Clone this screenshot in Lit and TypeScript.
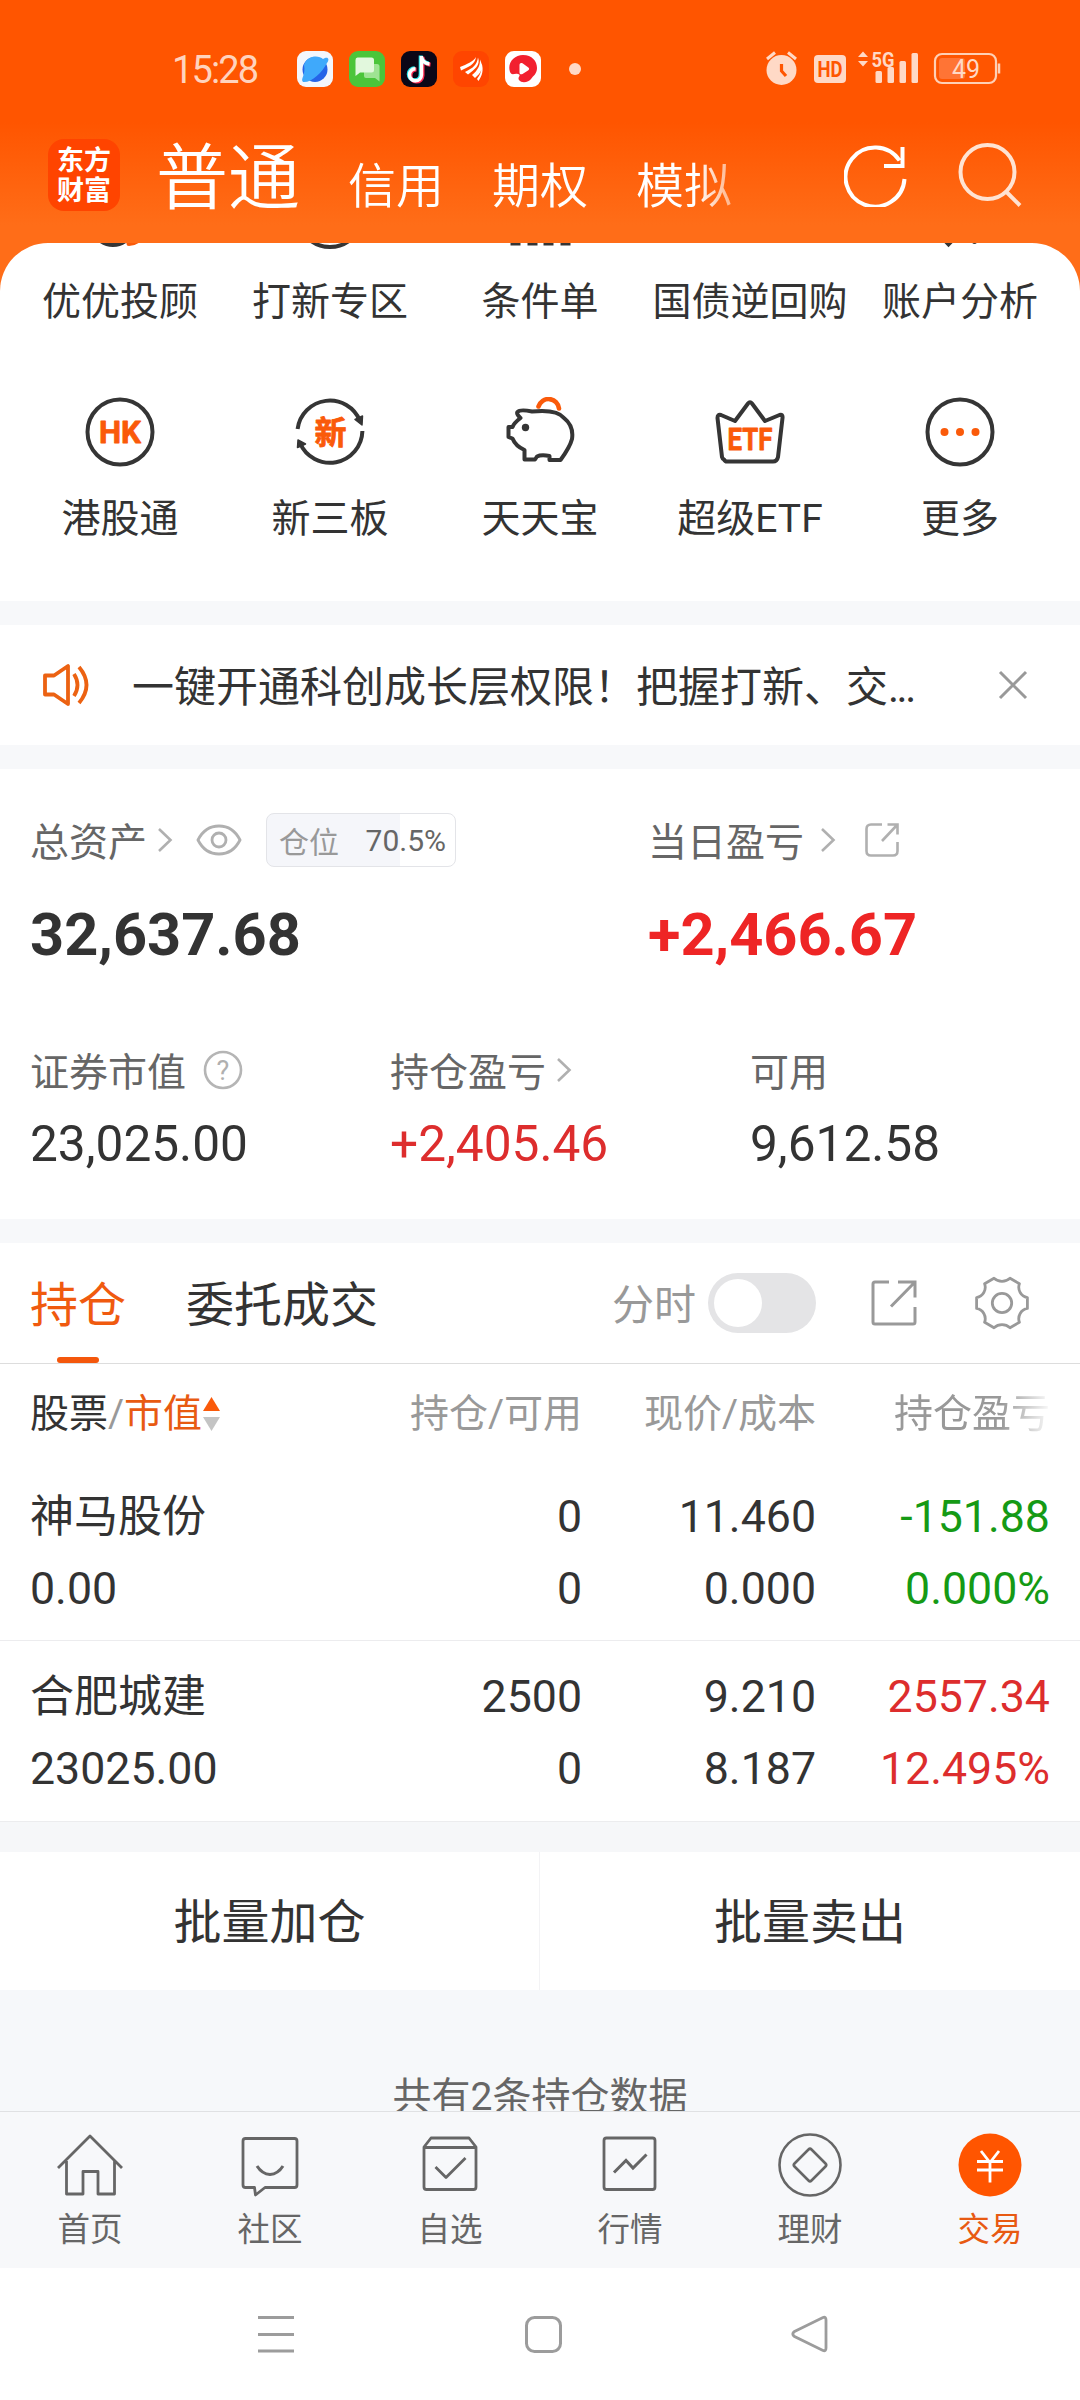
import { LitElement, html, css, svg } from "lit";
import { customElement } from "lit/decorators.js";
import { classMap } from "lit/directives/class-map.js";

const icon = (w: number, h: number, body: unknown) =>
  html`<svg width=${w} height=${h} viewBox="0 0 ${w} ${h}" fill="none">${body}</svg>`;

const chevron = icon(16, 26, svg`<path d="M2 2L13.500 13L2 24" stroke="#b0b0b0" stroke-width="2.600"/>`);

const appIcons = [
  svg`<rect width="36" height="36" rx="9" fill="#f3f6fc"/><circle cx="18" cy="18.500" r="12.500" fill="#2563e8"/><path d="M6 31C3 28 9 24 7 14C10 4 22 4 26 8C31 5 33 8 30 12C25 22 14 32 6 31Z" fill="#3fa9fb"/>`,
  svg`<rect width="36" height="36" rx="9" fill="#4bc53a"/><path d="M15 13h13a2.500 2.500 0 0 1 2.500 2.500v15l-4.500-3.500h-9a2 2 0 0 1-2-2z" fill="#9fe393"/><path d="M8.500 6.500h14a2.500 2.500 0 0 1 2.500 2.500v10a2.500 2.500 0 0 1-2.500 2.500h-11.500l-4.500 3.500v-16a2.500 2.500 0 0 1 2-2.500z" fill="#e2f8dd"/>`,
  svg`<rect width="36" height="36" rx="9" fill="#0b0717"/><g stroke-width="4" fill="none"><path d="M20.500 5v19a6 6 0 1 1-6-6.200M20.500 6c1 4.500 4 6.500 8 7" stroke="#ff2d55" transform="translate(1 .8)"/><path d="M20.500 5v19a6 6 0 1 1-6-6.200M20.500 6c1 4.500 4 6.500 8 7" stroke="#29e9ec" transform="translate(-.8 -.6)"/><path d="M20.500 5v19a6 6 0 1 1-6-6.200M20.500 6c1 4.500 4 6.500 8 7" stroke="#fff" stroke-width="3.400"/></g>`,
  svg`<rect width="36" height="36" rx="9" fill="#ff4500"/><path d="M7 16C14 13 20 11 23 6C22 14 15 16 8 19.500ZM12 21C20 17 24 14 25 6.500C28 14 21 19 15 23.500ZM19 24C25 19 27 15 27 8.500C31 17 28 22 22 27ZM24 28C28 23 29 18 28.500 12C31 19 29 25 25.500 30Z" fill="#fff"/>`,
  svg`<rect width="36" height="36" rx="9" fill="#fff"/><path d="M18 4C27 4 32 10 32 17C32 23 28 25 26 28C24 31 17 33 14 29C12 26 17 24 13 23C9 22 7 25 5 21C2 12 9 4 18 4Z" fill="#f2202f"/><path d="M14.500 14c0-2 1.500-2.500 3-1.700l5.500 4c1.500 1 1.500 2.200 0 3.200l-5.500 3.500c-1.500.8-3 .3-3-1.500z" fill="#fff"/>`,
];

const ink = "#353535";
const hot = "#fa5a0a";

const shortcuts = [
  { label: "优优投顾", art: svg`<circle cx="28" cy="44" r="21" stroke=${ink} stroke-width="4"/><path d="M44 63.500q8 0 13-8" stroke=${hot} stroke-width="5" stroke-linecap="round"/>` },
  { label: "打新专区", art: svg`<circle cx="35" cy="34.500" r="32.500" stroke=${ink} stroke-width="4"/>` },
  { label: "条件单", art: svg`<path d="M10.500 50v15.500M27.500 40v25.500M43.500 30v35.500M60.500 20v45.500" stroke=${ink} stroke-width="10"/>` },
  { label: "国债逆回购", art: svg`<circle cx="35" cy="30" r="26" stroke=${ink} stroke-width="4"/>` },
  { label: "账户分析", art: svg`<path d="M12 52l11.500 12l11.500-12" stroke=${ink} stroke-width="4.500"/><circle cx="49.500" cy="61.500" r="2.500" fill=${ink}/>` },
  { label: "港股通", art: svg`<circle cx="35" cy="35" r="32.500" stroke=${ink} stroke-width="4"/><text x="35" y="46" class="glyph" font-size="32" textLength="42" lengthAdjust="spacingAndGlyphs">HK</text>` },
  { label: "新三板", art: svg`<path d="M2.600 32A32.500 32.500 0 0 1 65 24M67.400 34A32.500 32.500 0 0 1 5 46" stroke=${ink} stroke-width="4"/><path d="M60 22.500l7.500-3.500l-.5 9zM3 43l7.500 4l-8 3.500z" fill=${ink} stroke=${ink} stroke-width="1.500" stroke-linejoin="round"/><text x="35.500" y="46.500" class="glyph cjk" font-size="32">新</text>` },
  { label: "天天宝", art: svg`<path d="M33.500 9.500a10.500 10.500 0 0 1 20.500 2" stroke=${hot} stroke-width="4.600" stroke-linecap="round"/><path d="M12.500 15Q15 12 27 14.500Q52 12 59 21Q69 29 67 42Q65 50 55.500 63H44.500V59Q36 57.500 32 59.500L30 62.500H19.500V53Q10.500 49 7.500 41.500L3.500 40V30H7.500Q9 26 15.500 21Q11 17 12.500 15Z" stroke=${ink} stroke-width="4" stroke-linejoin="round"/><circle cx="20.500" cy="30.500" r="3.700" fill=${ink}/>` },
  { label: "超级ETF", art: svg`<path d="M9 62.500Q7.500 62 7 60L2.500 21Q2.500 17 6 18L20 24L33 6.500Q35 4 37 6.500L50 24L64.500 18Q68 17 67.500 21L63 60Q62 64.500 58 64.500H12Q10 64.500 9 62.500Z" stroke=${ink} stroke-width="4" stroke-linejoin="round"/><text x="35" y="53" class="glyph" font-size="32" textLength="45" lengthAdjust="spacingAndGlyphs">ETF</text>` },
  { label: "更多", art: svg`<circle cx="35" cy="35" r="32.500" stroke=${ink} stroke-width="4"/><g fill=${hot}><circle cx="19.500" cy="35" r="4"/><circle cx="35" cy="35" r="4"/><circle cx="50.500" cy="35" r="4"/></g>` },
];

const holdings = [
  { name: "神马股份", value: "0.00", held: "0", usable: "0", price: "11.460", cost: "0.000", gain: "-151.88", rate: "0.000%", tone: "down" },
  { name: "合肥城建", value: "23025.00", held: "2500", usable: "0", price: "9.210", cost: "8.187", gain: "2557.34", rate: "12.495%", tone: "up" },
];

const g = "#666";
const navItems = [
  { label: "首页", art: svg`<path d="M1 35L33 3L65 35M9.500 28V61H26V38.500H41V61H57.500V28" stroke=${g} stroke-width="2.800" stroke-linejoin="round"/>` },
  { label: "社区", art: svg`<path d="M8.500 5.500H57.500Q60 5.500 60 8V52Q60 54.500 57.500 54.500H28L18.500 62L17.500 54.500H8.500Q6 54.500 6 52V8Q6 5.500 8.500 5.500Z" stroke=${g} stroke-width="2.800" stroke-linejoin="round"/><path d="M20 33Q25 41 33 41.500Q41 41 46 33" stroke=${g} stroke-width="3"/>` },
  { label: "自选", art: svg`<path d="M7 14L14 5H52L59 14V54Q59 56.500 56.500 56.500H9.500Q7 56.500 7 54ZM7 14.500H59M18.500 34L29 44.500L48.500 25" stroke=${g} stroke-width="2.800" stroke-linejoin="round"/>` },
  { label: "行情", art: svg`<rect x="7" y="5" width="51" height="51.500" rx="2.500" stroke=${g} stroke-width="2.800"/><path d="M17 39.500L29 27.500L36 35L49.500 21.500" stroke=${g} stroke-width="3"/>` },
  { label: "理财", art: svg`<circle cx="33" cy="32" r="30.500" stroke=${g} stroke-width="2.600"/><path d="M31.500 16.500Q33 15 34.500 16.500L48.500 30.500Q50 32 48.500 33.500L34.500 47.500Q33 49 31.500 47.500L17.500 33.500Q16 32 17.500 30.500Z" stroke=${g} stroke-width="2.600"/>` },
  { label: "交易", active: true, art: svg`<circle cx="33" cy="32" r="31.500" fill="#ff5500"/><path d="M24 18L33 29.500L42 18M20 28.500H46M20 37H46M33 28V49.500" stroke="#fff" stroke-width="2.800"/>` },
];

const shareLarge = icon(48, 48, svg`<path d="M19 3H5Q3 3 3 5V43Q3 45 5 45H43Q45 45 45 43V28M28 3H45V18.500M45 3L21 27.500" stroke="#999" stroke-width="3"/>`);
const shareSmall = html`<svg class="share" width="36" height="36" viewBox="0 0 36 36" fill="none"><path d="M18 2.500H7Q2.500 2.500 2.500 7V29Q2.500 33.500 7 33.500H29Q33.500 33.500 33.500 29V20M23.500 2.500H33.500V12.500M33.500 2.500L18 19" stroke="#b0b0b0" stroke-width="2.600"/></svg>`;
const gear = icon(54, 54, svg`<path d="M52.400 32.400A10.500 10.500 0 0 0 44.400 46.300L35 51.700A12 12 0 0 0 19 51.700L9.600 46.300A10.500 10.500 0 0 0 1.600 32.400V21.600A10.500 10.500 0 0 0 9.600 7.700L19 2.300A12 12 0 0 0 35 2.300L44.400 7.700A10.500 10.500 0 0 0 52.400 21.600Z" stroke="#999" stroke-width="2.800" stroke-linejoin="round"/><circle cx="27" cy="27" r="9.700" stroke="#999" stroke-width="2.800"/>`);

@customElement("app-root")
export class AppRoot extends LitElement {
  static styles = css`
    :host {
      display: block;
      width: 1080px;
      height: 2400px;
      overflow: hidden;
      background: #fff;
      color: #333;
      font-family: Roboto, "Noto Sans CJK SC", sans-serif;
    }
    * { box-sizing: border-box; }
    svg { display: block; flex: none; }
    .page { display: flex; flex-direction: column; height: 2400px; }
    .row { display: flex; align-items: center; }
    .hero {
      flex: none;
      height: 601px;
      background: linear-gradient(#ff5500 0, #ff5500 122px, #ff6d18 225px, #ff6d18 100%);
    }
    .status {
      height: 87px;
      padding: 51px 78px 0 172px;
      align-items: flex-start;
      color: #ffd3bd;
    }
    .clock { flex: none; font-size: 38px; line-height: 38px; width: 125px; letter-spacing: -1.9px; }
    .apps { flex: none; gap: 16px; }
    .indicators { margin-left: auto; }
    .dot { width: 12px; height: 12px; border-radius: 50%; margin-left: 12px; background: #ffd9c6; }
    .header { height: 156px; padding: 0 58px 0 48px; align-items: flex-start; }
    .logo {
      flex: none;
      margin-top: 52px;
      width: 72px;
      height: 72px;
      border-radius: 16px;
      background: #ff4400;
      color: #fff;
      font-family: "Noto Sans CJK SC", sans-serif;
      font-weight: 700;
      font-size: 27px;
      line-height: 30px;
      text-align: center;
      padding-top: 5px;
    }
    .modes {
      flex: none;
      display: flex;
      align-items: baseline;
      gap: 48px;
      width: 640px;
      margin: 40px 0 0 36px;
      color: #fff;
      font-size: 48px;
      font-weight: 350;
      line-height: 104px;
      white-space: nowrap;
      mask-image: linear-gradient(to right, #000 540px, transparent 612px);
    }
    .mode.current { font-size: 72px; }
    .tools { flex: none; margin: 54px 0 0 48px; gap: 50px; align-items: flex-start; }
    .sheet {
      height: 358px;
      border-radius: 48px 48px 0 0;
      background: #fff;
      overflow: hidden;
    }
    .grid {
      display: grid;
      grid-template-columns: repeat(5, 210px);
      grid-auto-rows: 217px;
      padding: 0 15px;
      margin-top: -63px;
    }
    .cell { display: flex; flex-direction: column; align-items: center; gap: 25px; }
    .cell-label { font-size: 39px; line-height: 54px; white-space: nowrap; }
    .glyph {
      fill: #fa5a0a;
      stroke: #fa5a0a;
      stroke-width: 0.8;
      stroke-linejoin: round;
      font-family: Roboto, sans-serif;
      font-weight: 700;
      text-anchor: middle;
    }
    .glyph.cjk { font-family: "Noto Sans CJK SC", sans-serif; }
    .band { flex: none; height: 24px; background: #f7f8fa; }
    .notice { flex: none; height: 120px; padding: 0 52px 0 42px; }
    .notice-text { margin-left: 40px; padding-bottom: 3px; font-size: 42px; flex: 1; white-space: nowrap; }
    .dots { letter-spacing: -2.500px; }
    .assets { flex: none; height: 450px; }
    .totals { display: grid; grid-template-columns: 618px 1fr; padding: 44px 0 0 30px; }
    .label { height: 54px; font-size: 39px; color: #666; white-space: nowrap; }
    .label > span { padding-bottom: 2px; }
    .label svg { margin-left: 10px; }
    .label.wide > span + svg { margin-left: 16px; }
    .label .share { margin-left: 28px; }
    .label .eye { margin-left: 23px; }
    .badge {
      margin-left: 24px;
      width: 190px;
      height: 54px;
      border: 1.500px solid #e3e4e8;
      border-radius: 8px;
      background: linear-gradient(to right, #f5f6fa 70.5%, #fff 70.5%);
      padding: 0 9px 0 12px;
      justify-content: space-between;
      font-size: 30px;
      color: #666;
    }
    .badge-name { color: #999; }
    .big { margin-top: 31px; font-size: 59.500px; line-height: 74px; font-weight: 700; }
    .parts { display: grid; grid-template-columns: 360px 360px 1fr; padding: 71px 0 0 30px; }
    .part-value { margin-top: 17px; font-size: 49.600px; line-height: 60px; }
    .up { color: #dd2d2d; }
    .big.up { color: #ee2525; }
    .down { color: #159a15; }
    .tabs { flex: none; height: 121px; border-bottom: 1px solid #ddd; padding: 0 51px 0 30px; align-items: stretch; }
    .tab { position: relative; display: flex; align-items: center; font-size: 48px; margin-right: 60px; padding-bottom: 4px; }
    .tab.current { color: #f05a0f; }
    .tab.current::after {
      content: "";
      position: absolute;
      left: 27px;
      bottom: 0;
      width: 42px;
      height: 6px;
      border-radius: 3px;
      background: #f4570c;
    }
    .tab-tools { margin-left: auto; color: #999; font-size: 42px; }
    .tab-tools > span { padding-bottom: 3px; }
    .switch { width: 108px; height: 60px; border-radius: 30px; background: #e4e4e6; padding: 6px; margin: 0 54px 0 12px; }
    .knob { width: 48px; height: 48px; border-radius: 50%; background: #fff; }
    .tab-tools svg + svg { margin-left: 57px; }
    .columns {
      flex: none;
      display: grid;
      grid-template-columns: 1fr 234px 234px 234px;
      align-content: start;
      padding: 0 30px;
      text-align: right;
      white-space: nowrap;
    }
    .head { height: 98px; padding-top: 1px; line-height: 98px; font-size: 39px; color: #999; }
    .sorter { display: flex; align-items: center; }
    .dark { color: #333; }
    .accent { color: #e85a12; }
    .faded { mask-image: linear-gradient(to right, #000 185px, rgba(0, 0, 0, 0.05) 234px); }
    .holding { height: 181px; padding-top: 20px; font-size: 44.700px; line-height: 72px; border-bottom: 1px solid #ececee; }
    .holding.first { height: 179px; padding-top: 19px; }
    .holding > .name { font-size: 44px; text-align: left; }
    .worth { text-align: left; }
    .gap { flex: none; height: 30px; background: #f6f7f9; }
    .actions { flex: none; display: grid; grid-template-columns: 539px 1fr; height: 138px; font-size: 48px; text-align: center; line-height: 142px; }
    .action + .action { border-left: 1px solid #f3f3f5; }
    .summary { flex: none; height: 121px; padding-top: 80px; background: #f6f8fa; color: #666; font-size: 39px; line-height: 54px; text-align: center; overflow: hidden; }
    .nav { flex: none; display: grid; grid-template-columns: repeat(6, 180px); height: 157px; background: #f7f8fa; border-top: 1px solid #e0e1e3; }
    .nav-item { display: flex; flex-direction: column; align-items: center; padding-top: 21px; color: #666; font-size: 32.500px; line-height: 40px; }
    .nav-item svg { margin-bottom: 13px; }
    .nav-item.current { color: #e85a12; }
    .system { flex: 1; padding: 0 252px 0 257px; justify-content: space-between; }
  `;

  render() {
    return html`
      <div class="page">
        <div class="hero">
          <div class="row status">
            <span class="clock">15:28</span>
            <div class="row apps">${appIcons.map((a) => icon(36, 36, a))}<i class="dot"></i></div>
            <svg class="indicators" width="236" height="36" viewBox="0 0 236 36" fill="none">
              <g fill="#ffd9c6">
                <circle cx="15.500" cy="19" r="15"/>
                <path d="M1 8L9 1.500M22 1.500L30 8" stroke="#ffd9c6" stroke-width="3"/>
                <path d="M15.500 13v7l4.500 5" stroke="#ff5500" stroke-width="3.200"/>
                <rect x="48" y="4" width="32" height="28" rx="4"/>
                <text x="64" y="26" text-anchor="middle" font-size="22" font-weight="700" fill="#ff5500" textLength="25" lengthAdjust="spacingAndGlyphs">HD</text>
                <path d="M92 6l5-5.500l5 5.500zM92 10h10l-5 5.500z"/>
                <text x="117" y="15.500" text-anchor="middle" font-size="20.500" font-weight="700" textLength="23" lengthAdjust="spacingAndGlyphs">5G</text>
                <rect x="109.500" y="20" width="6.500" height="12" rx="1.500"/>
                <rect x="121.500" y="16" width="6.500" height="16" rx="1.500"/>
                <rect x="133.500" y="10" width="6.500" height="22" rx="1.500"/>
                <rect x="145.500" y="2" width="6.500" height="30" rx="1.500"/>
                <rect x="169" y="3" width="61" height="29" rx="7" stroke="#ffd0b5" stroke-width="2.200" fill="none"/>
                <rect x="173" y="7" width="26" height="21" rx="3" fill="#ff7435"/>
                <path d="M233 12.500v10" stroke="#ffd0b5" stroke-width="2.500"/>
                <text x="200" y="26.500" text-anchor="middle" font-size="25">49</text>
              </g>
            </svg>
          </div>
          <div class="row header">
            <div class="logo">东方<br />财富</div>
            <div class="modes">
              <span class="mode current">普通</span><span class="mode">信用</span><span class="mode">期权</span><span class="mode">模拟</span>
            </div>
            <div class="row tools">
              ${icon(64, 66, svg`<path d="M60.500 38A29.500 29.500 0 1 1 55.500 19.500M58.500 6V25H40" stroke="#fff" stroke-width="4"/>`)}
              ${icon(64, 66, svg`<circle cx="29.500" cy="31" r="27" stroke="#ffe3d2" stroke-width="4"/><path d="M48.500 51L62 64.500" stroke="#ffe3d2" stroke-width="4"/>`)}
            </div>
          </div>
          <div class="sheet">
            <div class="grid">
              ${shortcuts.map((s) => html`<div class="cell">${icon(70, 70, s.art)}<span class="cell-label">${s.label}</span></div>`)}
            </div>
          </div>
        </div>
        <div class="band"></div>
        <div class="row notice">
          ${icon(50, 44, svg`<path d="M3 12.500H12L26 3V41L12 31.500H3ZM32 11Q39 22 32 33M37 4Q52 22 37 40" stroke="#ec6212" stroke-width="3.800" stroke-linejoin="round"/>`)}
          <span class="notice-text">一键开通科创成长层权限！把握打新、交<span class="dots">...</span></span>
          ${icon(30, 30, svg`<path d="M2 2L28 28M28 2L2 28" stroke="#999" stroke-width="3"/>`)}
        </div>
        <div class="band"></div>
        <div class="assets">
          <div class="totals">
            <div>
              <div class="row label">
                <span>总资产</span>${chevron}
                <svg class="eye" width="46" height="32" viewBox="0 0 46 32" fill="none"><path d="M2 16Q9 2 23 2T44 16Q37 30 23 30T2 16Z" stroke="#b0b0b0" stroke-width="2.800"/><circle cx="23" cy="16" r="7" stroke="#b0b0b0" stroke-width="2.800"/></svg>
                <div class="row badge"><span class="badge-name">仓位</span><span>70.5%</span></div>
              </div>
              <div class="big">32,637.68</div>
            </div>
            <div>
              <div class="row label wide"><span>当日盈亏</span>${chevron}${shareSmall}</div>
              <div class="big up">+2,466.67</div>
            </div>
          </div>
          <div class="parts">
            <div>
              <div class="row label wide">
                <span>证券市值</span>${icon(42, 42, svg`<circle cx="21" cy="21" r="18" stroke="#b5b5b5" stroke-width="2.600"/><text x="21" y="31" text-anchor="middle" font-size="27" fill="#b0b0b0">?</text>`)}
              </div>
              <div class="part-value">23,025.00</div>
            </div>
            <div>
              <div class="row label"><span>持仓盈亏</span>${chevron}</div>
              <div class="part-value up">+2,405.46</div>
            </div>
            <div>
              <div class="row label"><span>可用</span></div>
              <div class="part-value">9,612.58</div>
            </div>
          </div>
        </div>
        <div class="band"></div>
        <div class="row tabs">
          <span class="tab current">持仓</span>
          <span class="tab">委托成交</span>
          <div class="row tab-tools">
            <span>分时</span>
            <div class="switch"><div class="knob"></div></div>
            ${shareLarge}${gear}
          </div>
        </div>
        <div class="columns head">
          <span class="sorter"><span class="dark">股票</span>/<span class="accent">市值</span>${icon(18, 36, svg`<path d="M1 15L9.500 1L18 15Z" fill="#fa5a0a"/><path d="M1 21H18L9.500 35Z" fill="#c4c4c4"/>`)}</span>
          <span>持仓/可用</span><span>现价/成本</span><span class="faded">持仓盈亏</span>
        </div>
        ${holdings.map(
          (h, i) => html`<div class=${classMap({ columns: true, holding: true, first: i === 0 })}>
            <div class="name">${h.name}</div><div>${h.held}</div><div>${h.price}</div><div class=${h.tone}>${h.gain}</div>
            <div class="worth">${h.value}</div><div>${h.usable}</div><div>${h.cost}</div><div class=${h.tone}>${h.rate}</div>
          </div>`
        )}
        <div class="gap"></div>
        <div class="actions"><span class="action">批量加仓</span><span class="action">批量卖出</span></div>
        <div class="summary">共有2条持仓数据</div>
        <div class="nav">
          ${navItems.map((n) => html`<div class=${classMap({ "nav-item": true, current: !!n.active })}>${icon(66, 64, n.art)}<span>${n.label}</span></div>`)}
        </div>
        <div class="row system">
          ${icon(38, 38, svg`<path d="M1 2.500H37M1 19.500H37M1 36H37" stroke="#9c9c9c" stroke-width="3"/>`)}
          ${icon(38, 38, svg`<rect x="2.500" y="2.500" width="34" height="34" rx="8" stroke="#9c9c9c" stroke-width="3"/>`)}
          ${icon(38, 38, svg`<path d="M33 2.500Q36 1.500 36 5V33Q36 36.500 33 35.500L4.500 21.500Q1 19 4.500 16.500Z" stroke="#9c9c9c" stroke-width="2.800"/>`)}
        </div>
      </div>
    `;
  }
}
